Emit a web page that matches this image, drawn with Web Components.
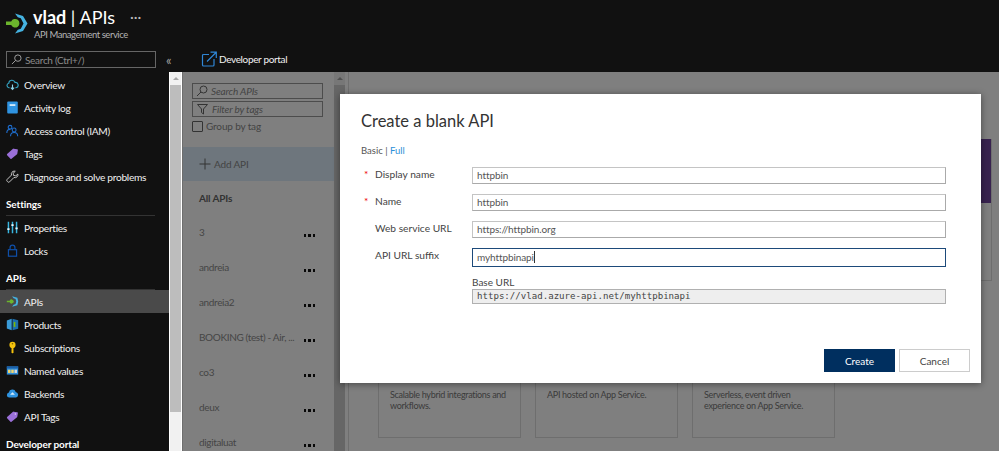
<!DOCTYPE html>
<html lang="en">
<head>
<meta charset="utf-8">
<title>vlad | APIs</title>
<style>
    html, body { margin: 0; padding: 0; background: #111; }
    body { font-family: Lato, "Liberation Sans", sans-serif; font-size: 11px; }
    svg { display: block; }
</style>
</head>
<body>

<apim-shell>
    <side-nav slot="nav">
        <nav-item label="Overview"><svg viewBox="0 0 16 16" fill="none" stroke="#35a5c5" stroke-width="1.4"><path d="M4.5 12H3.6a2.8 2.8 0 0 1-.2-5.5A3.9 3.9 0 0 1 11 5.4a3.2 3.2 0 0 1 1.2 6.6h-.7"/><path d="M8 8v6M6 11.8 8 14l2-2.200" stroke="#8fd3e8"/></svg></nav-item>
        <nav-item label="Activity log"><svg viewBox="0 0 16 16"><rect x="1.500" y="0.500" width="13" height="15" rx="1.200" fill="#2f93e0"/><rect x="4.500" y="4" width="7" height="2" fill="#e8f4fc"/></svg></nav-item>
        <nav-item label="Access control (IAM)"><svg viewBox="0 0 16 16" fill="none" stroke="#1f6fd0" stroke-width="1.300"><circle cx="5" cy="4" r="2.300"/><path d="M1 11c0-3 1.600-4.400 4-4.400"/><circle cx="10" cy="7.400" r="2.400"/><path d="M5.600 15c0-3 1.600-4.600 4.400-4.600s4.400 1.600 4.400 4.600"/></svg></nav-item>
        <nav-item label="Tags"><svg viewBox="0 0 16 16"><path d="M1.400 8.600 8.600 2.200a1 1 0 0 1 .8-.2l4.400.8a1 1 0 0 1 .8 1.200l-.7 4.400a1 1 0 0 1-.3.6l-6.800 5.600a1 1 0 0 1-1.300 0L1.400 10a1 1 0 0 1 0-1.400z" fill="#9a6fd8"/></svg></nav-item>
        <nav-item label="Diagnose and solve problems"><svg viewBox="0 0 16 16" fill="none" stroke="#c8c8c8" stroke-width="1.200"><path d="M10.400 1.400a3.600 3.600 0 0 0-3.600 4.800L1.400 11.600a1.600 1.600 0 0 0 0 2.200l.8.8a1.600 1.600 0 0 0 2.200 0l5.400-5.400a3.600 3.600 0 0 0 4.800-4.200L12 7.200 9.200 6.600 8.800 4l2.600-2.400z"/></svg></nav-item>

        <nav-heading>Settings</nav-heading>
        <nav-item label="Properties"><svg viewBox="0 0 16 16" stroke-width="1.800" fill="none"><path d="M3 1v14M8 1v14M13 1v14" stroke="#38b6e0"/><path d="M1.600 10h2.800M6.600 5h2.800M11.600 9h2.800" stroke="#e6f5fb" stroke-width="2"/></svg></nav-item>
        <nav-item label="Locks"><svg viewBox="0 0 16 16" fill="none" stroke="#0f4fa8" stroke-width="1.500"><rect x="3" y="7" width="10" height="8"/><path d="M5 7V4.400a3 3 0 0 1 6 0V7"/></svg></nav-item>

        <nav-heading>APIs</nav-heading>
        <nav-item label="APIs" selected><svg viewBox="0 0 16 16"><path d="M7.500 1.500 14 3.500l1 4.500-1 4.500-6.500 2 1.800-2.500 2.500-.8.800-3.200-.800-3.200-2.500-.8z" fill="#45b2e0"/><path d="M1 7h3.500a2.500 2.500 0 1 1 0 2H1z" fill="#6cb52d"/></svg></nav-item>
        <nav-item label="Products"><svg viewBox="0 0 16 16"><path d="M1 3.200 7 1v14l-6-2.200z" fill="#3a9bd8"/><path d="M8 1l7 1.800v10.400L8 15z" fill="#1c6fae"/><rect x="9.500" y="5" width="2" height="6" fill="#7fba00"/></svg></nav-item>
        <nav-item label="Subscriptions"><svg viewBox="0 0 16 16"><circle cx="8" cy="4.800" r="3.800" fill="#f4c20d"/><path d="M6.800 7.500h2.400v6.300L8 15.400l-1.200-1.200z" fill="#f4c20d"/><circle cx="8" cy="3.400" r="1" fill="#7a5f00"/></svg></nav-item>
        <nav-item label="Named values"><svg viewBox="0 0 16 16"><rect x="1" y="3" width="14" height="10" fill="#2f8fdc"/><rect x="1" y="3" width="14" height="2.500" fill="#1a5fa8"/><rect x="2.500" y="7" width="3" height="4" fill="#f1d56b"/><rect x="6.500" y="7" width="3" height="4" fill="#f1d56b"/><rect x="10.500" y="7" width="3" height="4" fill="#dcdcdc"/></svg></nav-item>
        <nav-item label="Backends"><svg viewBox="0 0 16 16"><path d="M4 13a3.200 3.200 0 0 1-.5-6.300A4.400 4.400 0 0 1 12 6a3.600 3.600 0 0 1 .4 7z" fill="#2f93e0"/><path d="M5 9.500 8 6.500l3 3z" fill="#d9eefb"/></svg></nav-item>
        <nav-item label="API Tags"><svg viewBox="0 0 16 16"><path d="M1.400 8.600 8.600 2.200a1 1 0 0 1 .8-.2l4.400.8a1 1 0 0 1 .8 1.200l-.7 4.400a1 1 0 0 1-.3.6l-6.800 5.600a1 1 0 0 1-1.300 0L1.400 10a1 1 0 0 1 0-1.400z" fill="#9a6fd8"/><circle cx="11.500" cy="4.800" r=".9" fill="#e4d8f5"/></svg></nav-item>

        <nav-heading plain>Developer portal</nav-heading>
    </side-nav>

    <api-list slot="list">
        <api-row>3</api-row>
        <api-row>andreia</api-row>
        <api-row>andreia2</api-row>
        <api-row>BOOKING (test) - Air, ...</api-row>
        <api-row>co3</api-row>
        <api-row>deux</api-row>
        <api-row>digitaluat</api-row>
    </api-list>

    <template-cards slot="cards">
        <api-card>Scalable hybrid integrations and workflows.</api-card>
        <api-card>API hosted on App Service.</api-card>
        <api-card>Serverless, event driven experience on App Service.</api-card>
    </template-cards>

    <blank-api-dialog slot="dialog">
        <form-row label="Display name" required>httpbin</form-row>
        <form-row label="Name" required>httpbin</form-row>
        <form-row label="Web service URL">https://httpbin.org</form-row>
        <form-row label="API URL suffix" focused>myhttpbinapi</form-row>
    </blank-api-dialog>
</apim-shell>

<script>
    const logo = `<svg viewBox="0 0 22 21" width="22" height="21">
        <path d="M9 0.500 17 3l4.500 7.500L17 18l-8 2.500 2.800-3.800 3-1 2.700-5.200-2.700-5.200-3-1z" fill="#45b2e0"/>
        <path d="M0 8.500h5.200a4.300 4.300 0 1 1 0 3.500H0z" fill="#6cb52d"/>
    </svg>`;

    class ApimShell extends HTMLElement {
        constructor() {
            super();
            this.attachShadow({ mode: "open" }).innerHTML = `
            <style>
                :host { display: flex; width: 999px; height: 451px; overflow: hidden; background: #111; color: #fff; }
                .left { width: 169px; flex: none; display: flex; flex-direction: column; }
                .brand { height: 51px; box-sizing: border-box; padding: 13px 0 0 6px; display: flex; gap: 5px; flex: none; }
                .brand h1 { margin: -7px 0 0; font-size: 18px; line-height: 22px; font-weight: 700; white-space: nowrap; }
                .brand h1 i, .brand h1 em { font-style: normal; font-weight: 400; }
                .brand p { margin: 0 0 0 1px; font-size: 9.500px; letter-spacing: -.45px; line-height: 13px; color: #b4b4b4; }
                .more { font-size: 12px; font-weight: 700; color: #bbb; margin-left: 15px; letter-spacing: .5px; vertical-align: 3px; }
                .searchrow { margin-left: 6px; display: flex; align-items: center; flex: none; }
                .search { width: 150px; flex: none; height: 17px; box-sizing: border-box; border: 1px solid #666; display: flex; align-items: center; gap: 3px; padding-left: 4px; color: #8c8c8c; font-size: 10px; letter-spacing: -.3px; }
                .collapse { margin-left: 10px; flex: none; font-size: 13px; color: #a0a0a0; line-height: 14px; }
                .right { flex: 1; min-width: 0; display: flex; flex-direction: column; }
                .toolbar { height: 72px; box-sizing: border-box; padding: 45px 0 0 32px; display: flex; align-items: center; flex: none; }
                .portal { display: flex; align-items: center; gap: 2px; font-size: 10px; letter-spacing: -.35px; color: #f2f2f2; }
                .body { flex: 1; display: flex; min-height: 0; }
                .bar { width: 13px; flex: none; box-sizing: border-box; border-left: 1px solid #fff; border-right: 1px solid #fff; background: #f1f1f1; display: flex; flex-direction: column; }
                .bar b { height: 13px; background: #f1f1f1; display: flex; align-items: center; justify-content: center; }
                .bar b::before { content: ""; border: 3px solid transparent; border-top: 0; border-bottom: 3px solid #a8a8a8; }
                .bar u { display: block; height: 327px; background: #bdbdbd; }
                .stage { flex: 1; position: relative; display: flex; background: #fff; min-width: 0; }
                .inner { flex: 1; display: flex; min-width: 0; }
                .veil { position: absolute; inset: 0; background: rgba(0,0,0,.5); }
                .scroll { width: 11px; flex: none; background: #efefef; display: flex; flex-direction: column; }
                .scroll b { height: 13px; display: flex; align-items: center; justify-content: center; }
                .scroll b::before { content: ""; border: 3px solid transparent; border-top: 0; border-bottom: 3px solid #a0a0a0; }
                .scroll u { display: block; flex: 1; background: #cdcdcd; }
                ::slotted([slot=dialog]) { position: absolute; left: 158px; top: 22px; }
            </style>
            <div class="left">
                <div class="brand">
                    ${logo}
                    <div>
                        <h1>vlad <i>|</i> <em>APIs</em><span class="more">···</span></h1>
                        <p>API Management service</p>
                    </div>
                </div>
                <div class="searchrow">
                    <div class="search">
                        <svg viewBox="0 0 12 12" width="11" height="11" fill="none" stroke="#a8a8a8" stroke-width="1"><circle cx="7.500" cy="4.500" r="3.500"/><path d="M5 7 1 11"/></svg>
                        <span>Search (Ctrl+/)</span>
                    </div>
                    <div class="collapse">«</div>
                </div>
                <slot name="nav"></slot>
            </div>
            <div class="right">
                <div class="toolbar">
                    <div class="portal">
                        <svg viewBox="0 0 16 16" width="16" height="16" fill="none" stroke="#2f86d6" stroke-width="1.200"><path d="M8 3.500H2.500a1 1 0 0 0-1 1V14a1 1 0 0 0 1 1H12a1 1 0 0 0 1-1V8"/><path d="M6 10.500 15 1.500M9.500 1.200h5.800V7"/></svg>
                        <span>Developer portal</span>
                    </div>
                </div>
                <div class="body">
                    <div class="bar"><b></b><u></u></div>
                    <div class="stage">
                        <div class="inner">
                            <slot name="list"></slot>
                            <div class="scroll"><b></b><u></u></div>
                            <slot name="cards"></slot>
                        </div>
                        <div class="veil"></div>
                        <slot name="dialog"></slot>
                    </div>
                </div>
            </div>`;
        }
    }

    class SideNav extends HTMLElement {
        constructor() {
            super();
            this.attachShadow({ mode: "open" }).innerHTML = `
            <style>:host { display: flex; flex-direction: column; padding-top: 5px; }</style>
            <slot></slot>`;
        }
    }

    class NavHeading extends HTMLElement {
        constructor() {
            super();
            this.attachShadow({ mode: "open" }).innerHTML = `
            <style>
                :host { display: block; margin: 0 14px 0 6px; height: 28px; box-sizing: border-box; padding-top: 9px; line-height: 14px; font-size: 10px; letter-spacing: -.1px; font-weight: 700; color: #fff; border-bottom: 1px solid #333; }
                :host([plain]) { border-bottom: 0; }
            </style>
            <slot></slot>`;
        }
    }

    class NavItem extends HTMLElement {
        constructor() {
            super();
            this.attachShadow({ mode: "open" }).innerHTML = `
            <style>
                :host { display: flex; align-items: center; height: 23px; padding-left: 6px; gap: 5px; font-size: 10.200px; letter-spacing: -.3px; color: #f0f0f0; }
                :host([selected]) { background: #4a4a4a; }
                ::slotted(svg) { width: 13px; height: 13px; }
            </style>
            <slot></slot><span>${this.getAttribute("label")}</span>`;
        }
    }

    class ApiList extends HTMLElement {
        constructor() {
            super();
            this.attachShadow({ mode: "open" }).innerHTML = `
            <style>
                :host { display: flex; flex-direction: column; width: 152px; flex: none; box-sizing: border-box; border-left: 1px solid #ddd; color: #333; font-size: 10px; letter-spacing: -.15px; background: #fff; }
                .filters { padding: 11px 11px 0 9px; height: 75px; box-sizing: border-box; flex: none; }
                .box { height: 16px; box-sizing: border-box; border: 1px solid #999; display: flex; align-items: center; gap: 3px; padding-left: 3px; margin-bottom: 2px; font-style: italic; color: #888; }
                .check { display: flex; align-items: center; gap: 3px; margin-top: 3px; color: #888; }
                .check i { width: 9px; height: 9px; border: 1px solid #666; border-radius: 1px; }
                .add { height: 34px; background: #dcedfa; display: flex; align-items: center; gap: 3px; padding-left: 16px; color: #888; flex: none; }
                .all { height: 33px; margin-bottom: 11px; padding-left: 16px; display: flex; align-items: center; font-weight: 700; color: #666; flex: none; }
            </style>
            <div class="filters">
                <div class="box"><svg viewBox="0 0 12 12" width="12" height="12" fill="none" stroke="#666"><circle cx="7.500" cy="4.500" r="3.500"/><path d="M5 7 1 11"/></svg>Search APIs</div>
                <div class="box"><svg viewBox="0 0 12 12" width="13" height="12" fill="none" stroke="#666"><path d="M1 1.500h10L7 6v5L5 9.500V6z"/></svg>Filter by tags</div>
                <div class="check"><i></i>Group by tag</div>
            </div>
            <div class="add"><svg viewBox="0 0 12 12" width="12" height="12" stroke="#666" fill="none"><path d="M6 .5v11M.5 6h11"/></svg>Add API</div>
            <div class="all">All APIs</div>
            <slot></slot>`;
        }
    }

    class ApiRow extends HTMLElement {
        constructor() {
            super();
            this.attachShadow({ mode: "open" }).innerHTML = `
            <style>
                :host { display: flex; height: 35px; flex: none; padding-left: 16px; box-sizing: border-box; padding-right: 19px; color: #8c8c8c; letter-spacing: -.35px; }
                .name { flex: 1; white-space: nowrap; overflow: hidden; line-height: 15px; }
                .dots { display: flex; gap: 2px; padding-top: 9px; }
                .dots i { width: 2.500px; height: 2.500px; background: #111; }
            </style>
            <div class="name"><slot></slot></div>
            <div class="dots"><i></i><i></i><i></i></div>`;
        }
    }

    // the cards behind the veil, only the lower row and one purple corner show
    class TemplateCards extends HTMLElement {
        constructor() {
            super();
            this.attachShadow({ mode: "open" }).innerHTML = `
            <style>
                :host { flex: 1; min-width: 0; display: flex; flex-direction: column; box-sizing: border-box; border-left: 1px solid #ddd; margin-left: 3px; padding: 67px 7px 0 29px; }
                .top { display: flex; justify-content: flex-end; height: 142px; }
                .hero { width: 142px; box-sizing: border-box; border: 1px solid #ddd; border-top: 0; }
                .hero::before { content: ""; display: block; height: 64px; background: #70459f; }
                .row { display: flex; gap: 14px; margin-top: 15px; }
            </style>
            <div class="top"><div class="hero"></div></div>
            <div class="row"><slot></slot></div>`;
        }
    }

    class ApiCard extends HTMLElement {
        constructor() {
            super();
            this.attachShadow({ mode: "open" }).innerHTML = `
            <style>
                :host { display: block; width: 143px; height: 142px; box-sizing: border-box; border: 1px solid #ddd; padding: 92px 11px 0; font-size: 9px; letter-spacing: -.3px; line-height: 11px; color: #777; }
            </style>
            <slot></slot>`;
        }
    }

    class BlankApiDialog extends HTMLElement {
        constructor() {
            super();
            this.attachShadow({ mode: "open" }).innerHTML = `
            <style>
                :host { display: flex; flex-direction: column; width: 641px; height: 289px; box-sizing: border-box; padding: 17px 11px 11px 21px; background: #fff; color: #333; box-shadow: 0 1px 7px rgba(0,0,0,.45); }
                h2 { margin: 0; font-size: 16.500px; line-height: 20px; font-weight: 400; color: #333; }
                .mode { margin: 13px 0 9px; font-size: 9.500px; line-height: 14px; color: #555; }
                .mode a { color: #2c8fd8; }
                .base { margin: 1px 0 0 111px; width: 474px; font-size: 10px; line-height: 13px; color: #444; }
                .base code { display: block; height: 15px; box-sizing: border-box; border: 1px solid #b0b0b0; background: #eee; padding-left: 4px; font: 9.100px/13px "DejaVu Sans Mono", "Liberation Mono", monospace; color: #444; }
                .actions { margin-top: auto; display: flex; justify-content: flex-end; gap: 4px; }
                button { width: 71px; height: 23px; box-sizing: border-box; font: inherit; font-size: 10px; border: 1px solid #ccc; background: #fff; color: #444; padding: 0; }
                button.primary { background: #002f5f; border-color: #002f5f; color: #fff; }
            </style>
            <h2>Create a blank API</h2>
            <div class="mode">Basic | <a>Full</a></div>
            <slot></slot>
            <div class="base">Base URL<code>https://vlad.azure-api.net/myhttpbinapi</code></div>
            <div class="actions"><button class="primary">Create</button><button>Cancel</button></div>`;
        }
    }

    class FormRow extends HTMLElement {
        constructor() {
            super();
            this.attachShadow({ mode: "open" }).innerHTML = `
            <style>
                :host { display: flex; height: 27px; font-size: 10.200px; color: #444; }
                .star { width: 11px; margin-left: 3px; color: #e00; line-height: 14px; }
                label { width: 97px; line-height: 14px; }
                .field { width: 474px; height: 17px; box-sizing: border-box; border: 1px solid #c4c4c4; border-bottom-color: #aaa; border-right-color: #aaa; padding-left: 4px; line-height: 15px; font-size: 10px; letter-spacing: -.1px; color: #555; background: #fff; }
                :host([focused]) .field { height: 19px; border: 1px solid #1d4a7a; line-height: 17px; }
                :host([focused]) .field::after { content: ""; display: inline-block; width: 1px; height: 12px; background: #333; vertical-align: -2px; }
            </style>
            <span class="star">${this.hasAttribute("required") ? "*" : ""}</span>
            <label>${this.getAttribute("label")}</label>
            <div class="field"><slot></slot></div>`;
        }
    }

    customElements.define("apim-shell", ApimShell);
    customElements.define("side-nav", SideNav);
    customElements.define("nav-heading", NavHeading);
    customElements.define("nav-item", NavItem);
    customElements.define("api-list", ApiList);
    customElements.define("api-row", ApiRow);
    customElements.define("template-cards", TemplateCards);
    customElements.define("api-card", ApiCard);
    customElements.define("blank-api-dialog", BlankApiDialog);
    customElements.define("form-row", FormRow);
</script>
</body>
</html>
